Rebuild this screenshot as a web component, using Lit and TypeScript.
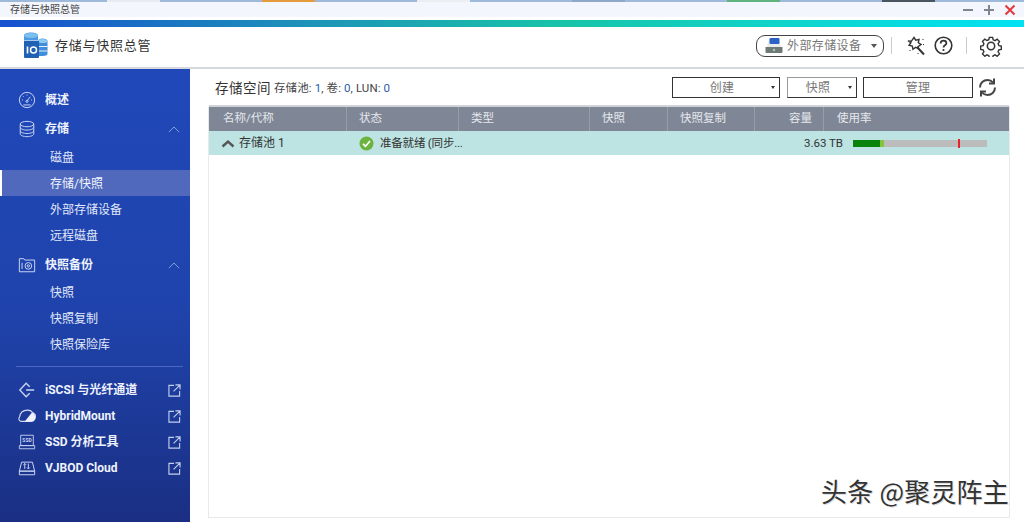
import { LitElement, html, css, svg } from "lit";
import { customElement } from "lit/decorators.js";

const line = (c: unknown) => html`<svg class="nav-icon" viewBox="0 0 20 20" fill="none" stroke="#c9d5f2" stroke-width="1.1">${c}</svg>`;

const icons: Record<string, unknown> = {
  gauge: line(svg`<circle cx="10" cy="10" r="8.500"/><path d="M10 11l3.500-4.500M4.500 10h1M6 6l.7.7M10 4v1M15.500 10h-1"/><circle cx="10" cy="11.500" r="1.200"/><path d="M6 15.500h8"/>`),
  db: line(svg`<ellipse cx="10" cy="4.500" rx="7.500" ry="3"/><path d="M2.500 4.500v11c0 1.600 3.400 3 7.500 3s7.500-1.400 7.500-3v-11M2.500 8.200c0 1.600 3.400 3 7.500 3s7.500-1.400 7.500-3M2.500 12c0 1.600 3.400 3 7.500 3s7.500-1.400 7.500-3"/>`),
  snap: line(svg`<path d="M1.500 17.500V3h5l1 1.500h11v13z"/><circle cx="11.500" cy="11" r="3.700"/><circle cx="11.500" cy="11" r="1.300"/><path d="M4.500 7.500v7"/>`),
  iscsi: line(svg`<path d="M13 6.500L9 2.500 2 10l7 7.500 4-4M9 10h9" stroke-width="1.500"/>`),
  cloud: html`<svg class="nav-icon" viewBox="0 0 20 20"><path d="M3.500 16C1 15.500 .2 12.800 1.800 11 2.500 6.500 6 3.500 10.500 3.500c2.500 0 4.500 1 5.500 2.500 3 .8 4 3.500 3 6.500-.8 2.300-2.500 3.500-4.500 3.500z" fill="none" stroke="#d3dcf5" stroke-width="1.200"/><path d="M7.500 16L15.500 6c3 .8 4 3.500 3.500 6.500-.8 2.300-2.500 3.500-4.500 3.500z" fill="#eef2fc"/></svg>`,
  ssd: html`<svg class="nav-icon" viewBox="0 0 20 20" fill="none" stroke="#c9d5f2" stroke-width="1"><path d="M3 2.500h14v11.500H3zM1.500 14h17v3.500h-17z"/><text x="10" y="10.500" font-size="5.500" font-weight="700" text-anchor="middle" fill="#c9d5f2" stroke="none" font-family="Roboto, sans-serif">SSD</text></svg>`,
  jbod: line(svg`<path d="M4 3.500h12l2.500 10h-17zM1.500 13.500h17v4h-17zM7.500 5v6M6 6.500L7.500 5 9 6.500M11.500 5v6M10 9.500l1.500 1.500 1.500-1.500"/>`),
};

const external = html`<svg class="ext" viewBox="0 0 14 14" fill="none" stroke="#c3d0ef" stroke-width="1.200"><path d="M6.500 1.500H1v11.500h11.500V7.500M6 8l6.500-6.500M8 1h5v5"/></svg>`;
const chevron = html`<svg class="chev" viewBox="0 0 14 8" fill="none" stroke="#8ea6e2" stroke-width="1.100"><path d="M1 7l6-6 6 6"/></svg>`;

interface NavItem { label: string; icon: string; open?: boolean; ext?: boolean; subs?: string[]; }

const nav: NavItem[] = [
  { label: "概述", icon: "gauge" },
  { label: "存储", icon: "db", open: true, subs: ["磁盘", "存储/快照", "外部存储设备", "远程磁盘"] },
  { label: "快照备份", icon: "snap", open: true, subs: ["快照", "快照复制", "快照保险库"] },
];
const tools: NavItem[] = [
  { label: "iSCSI 与光纤通道", icon: "iscsi", ext: true },
  { label: "HybridMount", icon: "cloud", ext: true },
  { label: "SSD 分析工具", icon: "ssd", ext: true },
  { label: "VJBOD Cloud", icon: "jbod", ext: true },
];
const strip = ["#e8ebef", "#e59a3c", "#eceff2", "#8fa8c8", "#5fb37c", "#4a5560"];
const columns = ["名称/代称", "状态", "类型", "快照", "快照复制", "容量", "使用率"];

@customElement("app-root")
export class AppRoot extends LitElement {
  static styles = css`
    :host {
      display: block;
      width: 1024px;
      height: 522px;
      overflow: hidden;
      position: relative;
      background: #fff;
      font-family: Roboto, "Noto Sans CJK SC", sans-serif;
      font-size: 12px;
      line-height: 16px;
      color: #333;
    }
    .strip {
      height: 2px;
      background: #9fb9da;
      display: flex;
      gap: 102px;
      padding-left: 107px;
    }
    .strip i { width: 53px; }
    .titlebar {
      height: 15px;
      background: #f3f6fd;
      display: flex;
      align-items: center;
      padding: 0 8px 0 10px;
      font-size: 10px;
      color: #444;
    }
    .titlebar span { flex: 1; }
    .winbtns { display: flex; gap: 9px; }
    .winbtns svg { width: 12px; height: 12px; display: block; }
    .grad {
      height: 7px;
      margin-top: 3px;
      background: linear-gradient(90deg, #1650cf 0%, #1d93b8 30%, #17c4a8 55%, #10d3c8 75%, #00e2f2 100%);
    }
    .header {
      height: 42px;
      box-sizing: border-box;
      border-bottom: 2px solid #d5d8dc;
      display: flex;
      align-items: center;
      padding: 0 22px 3px 23px;
    }
    .logo { width: 25px; height: 27px; margin-right: 7px; }
    .app-name { font-size: 13px; letter-spacing: 0.750px; color: #333; flex: 1; }
    .pill {
      width: 118px;
      height: 20px;
      border: 1px solid #444;
      border-radius: 9px;
      display: flex;
      align-items: center;
      padding-left: 8px;
      font-size: 12px;
      letter-spacing: 0.400px;
      color: #777;
    }
    .pill svg { width: 18px; height: 16px; margin-right: 4px; }
    .pill b { margin-left: 10px; border: 3px solid transparent; border-top: 4px solid #555; border-bottom: 0; }
    .sep { width: 1px; height: 17px; background: #ccc; }
    .sep.one { margin-left: 7px; }
    .sep.two { margin-left: 13px; }
    .tool { display: block; }
    .wand { width: 20px; height: 20px; margin-left: 14px; }
    .help { width: 19px; height: 19px; margin-left: 8px; }
    .gear { width: 22px; height: 22px; margin-left: 13px; }
    .body { display: flex; height: 453px; }
    .side {
      width: 190px;
      flex: none;
      box-sizing: border-box;
      padding-top: 17px;
      background: linear-gradient(180deg, #2048b9 0%, #1f43ab 55%, #1a2f83 100%);
      color: #eef2fc;
    }
    .row {
      height: 26px;
      display: flex;
      align-items: center;
      padding: 2px 9px 0 18px;
      font-weight: 700;
      margin-bottom: 3px;
      box-sizing: border-box;
    }
    .nav-icon { width: 18px; height: 18px; margin-right: 9px; flex: none; }
    .row span { flex: 1; }
    .chev { width: 12px; height: 7px; margin-right: 1px; }
    .ext { width: 13px; height: 13px; }
    .sub {
      height: 26px;
      display: flex;
      align-items: center;
      padding: 2px 0 0 50px;
      color: #e3e9f8;
      box-sizing: border-box;
    }
    .sub.active { background: #5069bd; border-left: 2px solid #fff; padding-left: 48px; color: #f2f5fd; }
    .subs { margin-bottom: 3px; }
    .subs.last { margin-top: -1px; }
    .divider { height: 1px; background: #4a66bd; margin: 9px 7px 9px 16px; }
    .tools .row { margin-bottom: 0; }
    .main { flex: 1; padding: 0 14px 4px 18px; display: flex; flex-direction: column; box-sizing: border-box; }
    .toolbar { height: 37px; display: flex; align-items: center; padding: 0 12px 0 7px; flex: none; }
    .heading { font-size: 13.500px; letter-spacing: 0.500px; color: #333; margin-right: 3px; }
    .stats { font-size: 11.500px; letter-spacing: 0.100px; color: #444; flex: 1; }
    .stats em { font-style: normal; color: #2b5cab; }
    .btn {
      height: 21px;
      box-sizing: border-box;
      border: 1px solid #333;
      display: flex;
      align-items: center;
      justify-content: center;
      position: relative;
      color: #777;
      font-size: 12px;
      letter-spacing: 0.300px;
    }
    .btn.create { width: 108px; margin-right: 7px; padding-right: 8px; }
    .btn.snap { width: 70px; margin-right: 6px; padding-right: 8px; border-color: #999 #333 #333 #999; }
    .btn.manage { width: 110px; margin-right: 4px; }
    .btn b { position: absolute; right: 4px; top: 8px; border: 2.500px solid transparent; border-top: 3px solid #333; border-bottom: 0; }
    .refresh { width: 21px; height: 21px; }
    .table { flex: 1; border: solid #e8e9eb; border-width: 0 1px 1px; }
    .thead {
      display: grid;
      grid-template-columns: 138px 112px 131px 78px 87px 69px 1fr;
      height: 24px;
      margin-top: -1px;
      background: #7f8797;
      border-top: 2px solid #cfd2d6;
      color: #e6e8ec;
    }
    .thead div { display: flex; align-items: center; padding: 0 0 3px 12px; border-right: 1px solid #969da9; box-sizing: border-box; font-size: 11.500px; }
    .thead div:first-child { padding-left: 14px; }
    .thead div:nth-child(6) { justify-content: flex-end; padding-right: 11px; }
    .thead div:last-child { border-right: 0; padding-left: 13px; }
    .tr {
      display: grid;
      grid-template-columns: 138px 112px 1fr 134px;
      padding-right: 22px;
      height: 24px;
      background: #bde3e2;
    }
    .tr > div { display: flex; align-items: center; }
    .name { padding-left: 12px; gap: 4px; }
    .name svg { width: 14px; height: 9px; }
    .status { padding-left: 12px; gap: 6px; white-space: nowrap; font-size: 11.500px; letter-spacing: -0.200px; }
    .status svg { width: 15px; height: 15px; flex: none; }
    .cap { justify-content: flex-end; padding-right: 10px; color: #333; white-space: nowrap; font-size: 11.500px; }
    .bar { position: relative; flex: 1; height: 7px; background: #bcbcbc; display: flex; }
    .bar .a { background: #0a830c; }
    .bar .b { background: #86c440; }
    .bar .mark { position: absolute; top: -1px; height: 9px; width: 2px; background: #e8212f; }
    .mark-text {
      position: absolute;
      left: 821px;
      top: 477px;
      font-size: 26px;
      line-height: 28px;
      color: #333;
      font-family: "Noto Sans CJK SC", sans-serif;
      text-shadow: 1px 1px 0 #ddd;
      white-space: nowrap;
      letter-spacing: 0.200px;
    }
  `;

  navRow(n: NavItem) {
    return html`<div class="row">${icons[n.icon]}<span>${n.label}</span>${n.open ? chevron : ""}${n.ext ? external : ""}</div>`;
  }

  render() {
    return html`
      <div class="strip">${strip.map((c) => html`<i style="background:${c}"></i>`)}</div>
      <div class="titlebar">
        <span>存储与快照总管</span>
        <div class="winbtns">
          <svg viewBox="0 0 12 12"><path d="M1 6h10" stroke="#7d858d" stroke-width="2"/></svg>
          <svg viewBox="0 0 12 12"><path d="M1 6h10M6 1v10" stroke="#7d858d" stroke-width="2"/></svg>
          <svg viewBox="0 0 12 12"><path d="M1.500 1.500l9 9M10.500 1.500l-9 9" stroke="#e5383b" stroke-width="2"/></svg>
        </div>
      </div>
      <div class="grad"></div>
      <div class="header">
        <svg class="logo" viewBox="0 0 25 27">
          <path d="M1 3.500C1 1.500 4 .5 8 .5s7 1 7 3v5H1z" fill="#4c9ae0"/>
          <ellipse cx="8" cy="3.500" rx="7" ry="2.500" fill="#7cc0ef"/>
          <path d="M15 9c0-1.500 2-2.500 4.500-2.500S24.500 7.500 24.500 9v13c0 1.200-2 2-4.500 2H15z" fill="#3f8edb"/>
          <ellipse cx="19.700" cy="9" rx="4.800" ry="2" fill="#8ccaf2"/>
          <path d="M16 14.500h8.500M16 19h8.500" stroke="#e6f1fb" stroke-width="1"/>
          <path d="M1 9h15v16a1 1 0 0 1-1 1H2a1 1 0 0 1-1-1z" fill="#2161b4"/>
          <path d="M4.500 14.500v7" stroke="#fff" stroke-width="1.600"/>
          <circle cx="10.500" cy="18" r="3" fill="none" stroke="#fff" stroke-width="1.500"/>
        </svg>
        <div class="app-name">存储与快照总管</div>
        <div class="pill">
          <svg viewBox="0 0 18 16">
            <path d="M2 9L4 1.500h10L16 9z" fill="#e8eaec"/>
            <rect x="4.500" y="0" width="10" height="6" rx="1" fill="#2a62c8"/>
            <path d="M0.500 9h17v5a1 1 0 0 1-1 1h-15a1 1 0 0 1-1-1z" fill="#6f7a78"/>
            <circle cx="9" cy="12" r="1.200" fill="#a9cfa4"/>
          </svg>
          外部存储设备<b></b>
        </div>
        <div class="sep one"></div>
        <svg class="tool wand" viewBox="0 0 20 20" fill="none" stroke="#333" stroke-width="1.400">
          <path d="M8 1.500l1.800 2.700 3.200-.7-.7 3.200 2.700 1.800-2.700 1.800-.3 2-2.400-1-2.600 2-.7-3.200-3.200-.7 1.800-2.700L2 5l3.200.3z"/>
          <path d="M11 11l7 7.500" stroke-width="2"/>
          <path d="M17 3v1M17.500 8v1M12 17v1M4 14v1" stroke-width="1"/>
        </svg>
        <svg class="tool help" viewBox="0 0 19 19">
          <circle cx="9.500" cy="9.500" r="8.300" fill="none" stroke="#333" stroke-width="1.600"/>
          <path d="M6.600 7.400c0-1.700 1.300-2.700 2.900-2.700s2.900 1 2.900 2.500c0 2.200-2.900 2-2.900 4.300" fill="none" stroke="#333" stroke-width="1.700"/>
          <circle cx="9.500" cy="14" r="1.100" fill="#333"/>
        </svg>
        <div class="sep two"></div>
        <svg class="tool gear" viewBox="0 0 24 24" fill="none" stroke="#333" stroke-width="1.700">
          <path d="M10 1.500h4l.6 3 2.300 1 2.600-1.700 2.800 2.800-1.700 2.600 1 2.300 2.900.6v4l-2.900.6-1 2.300 1.700 2.600-2.800 2.800-2.600-1.700-2.300 1-.6 2.800h-4l-.6-2.800-2.300-1-2.600 1.700-2.800-2.800 1.700-2.600-1-2.300-2.900-.6v-4l2.900-.6 1-2.300L1.700 6.400l2.800-2.800 2.600 1.700 2.300-1z" transform="translate(1.200 1.200) scale(.9)"/>
          <circle cx="12" cy="12" r="4"/>
        </svg>
      </div>
      <div class="body">
        <div class="side">
          ${this.navRow(nav[0])}
          ${this.navRow(nav[1])}
          <div class="subs">
            ${nav[1].subs!.map((s, i) => html`<div class="sub ${i === 1 ? "active" : ""}">${s}</div>`)}
          </div>
          ${this.navRow(nav[2])}
          <div class="subs last">
            ${nav[2].subs!.map((s) => html`<div class="sub">${s}</div>`)}
          </div>
          <div class="divider"></div>
          <div class="tools">${tools.map((t) => this.navRow(t))}</div>
        </div>
        <div class="main">
          <div class="toolbar">
            <span class="heading">存储空间</span>
            <span class="stats">存储池: <em>1</em>, 卷: <em>0</em>, LUN: <em>0</em></span>
            <div class="btn create">创建<b></b></div>
            <div class="btn snap">快照<b></b></div>
            <div class="btn manage">管理</div>
            <svg class="refresh" viewBox="0 0 21 21" fill="none" stroke="#444" stroke-width="2">
              <path d="M3 10.500C3 6 6.500 3 10.500 3c2.500 0 4.300 1 5.500 2.500M18 10.500c0 4.500-3.500 7.500-7.500 7.500-2.500 0-4.300-1-5.500-2.500"/>
              <path d="M17 1.500V6.500h-5M4 19.500v-5h5"/>
            </svg>
          </div>
          <div class="table">
            <div class="thead">${columns.map((c) => html`<div>${c}</div>`)}</div>
            <div class="tr">
              <div class="name">
                <svg viewBox="0 0 14 9"><path d="M1.500 7.500L7 2.500l5.500 5" fill="none" stroke="#555" stroke-width="2.400"/></svg>
                存储池 1
              </div>
              <div class="status">
                <svg viewBox="0 0 15 15"><circle cx="7.500" cy="7.500" r="7" fill="#6db33f"/><path d="M4 7.800l2.500 2.500L11 5" fill="none" stroke="#fff" stroke-width="1.700"/></svg>
                准备就绪 (同步...
              </div>
              <div class="cap">3.63 TB</div>
              <div>
                <div class="bar">
                  <div class="a" style="width:27px"></div>
                  <div class="b" style="width:4px"></div>
                  <div class="mark" style="left:105px"></div>
                </div>
              </div>
            </div>
          </div>
        </div>
      </div>
      <div class="mark-text">头条 @聚灵阵主</div>
    `;
  }
}
